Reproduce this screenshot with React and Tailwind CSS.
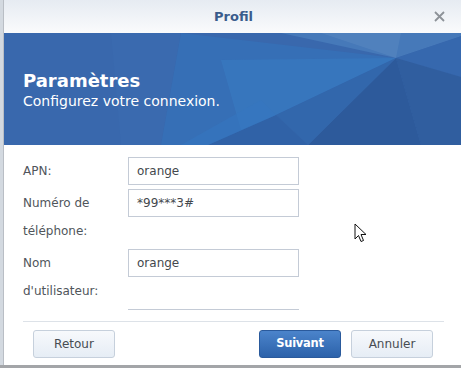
import React from "react";

const font = { fontFamily: '"DejaVu Sans", Verdana, sans-serif' };

function Banner() {
  return (
    <svg className="absolute inset-0" width="460" height="112" viewBox="3 33 460 112" preserveAspectRatio="none">
      <rect x="3" y="33" width="460" height="112" fill="#3968ad" />
      <polygon points="110,33 180,33 160,145 120,145" fill="#3a6aaf" />
      <polygon points="180,33 395,58 275,115 230,145 160,145" fill="#366fb6" />
      <polygon points="220,60 395,58 275,115 240,130" fill="#3779c0" opacity="0.7" />
      <polygon points="280,33 470,33 395,58" fill="#4679b9" />
      <polygon points="320,33 400,33 395,58" fill="#5484bf" opacity="0.7" />
      <polygon points="395,58 470,33 470,80" fill="#3668ae" />
      <polygon points="395,58 470,80 470,145 420,145" fill="#305e9f" />
      <polygon points="395,58 420,145 307,145" fill="#2d5a9b" />
      <polygon points="395,58 307,145 275,115" fill="#3267ac" />
      <polygon points="275,115 307,145 207,145" fill="#3062a7" />
      <polygon points="260,100 275,115 207,145 180,145" fill="#3676bf" opacity="0.6" />
    </svg>
  );
}

function Label({ children }) {
  return (
    <div className="w-[105px] shrink-0 text-[12px] leading-[28px] text-[#50555b]">
      {children}
    </div>
  );
}

function Input({ value }) {
  return (
    <div className="w-[171px] h-[28px] border border-[#c4cbd6] bg-white px-[8px] text-[12px] leading-[26px] text-[#44484d]">
      {value}
    </div>
  );
}

export default function App() {
  return (
    <div className="w-[461px] h-[368px] overflow-hidden bg-[#a3a5a8] flex" style={font}>
      <div className="w-[3px] h-[365px] shrink-0 bg-[#d3d9e0]" />
      <div className="relative w-[460px] h-[365px] shrink-0 bg-white flex flex-col border-l border-[#b9bec5]">
        {/* title bar */}
        <div className="relative h-[33px] shrink-0 bg-gradient-to-b from-[#e6ebf2] to-[#fafbfc] flex items-center justify-center">
          <span className="text-[13px] font-bold text-[#3a5c8c] leading-[16px]">Profil</span>
          <svg className="absolute left-[430px] top-[11px]" width="11" height="11" viewBox="0 0 11 11">
            <path d="M1 1 L10 10 M10 1 L1 10" stroke="#8d9298" strokeWidth="1.8" />
          </svg>
        </div>
        {/* banner */}
        <div className="relative h-[112px] shrink-0 overflow-hidden">
          <Banner />
          <div className="relative pl-[19px] pt-[37px] text-white">
            <div className="text-[18px] leading-[22px] font-bold">Paramètres</div>
            <div className="text-[14px] leading-[18px]">Configurez votre connexion.</div>
          </div>
        </div>
        {/* form */}
        <div className="h-[165px] shrink-0 overflow-hidden pl-[19px] pt-[12px] flex flex-col gap-[4px]">
          <div className="flex items-start">
            <Label>APN:</Label>
            <Input value="orange" />
          </div>
          <div className="flex items-start">
            <Label>Numéro de<br />téléphone:</Label>
            <Input value="*99***3#" />
          </div>
          <div className="flex items-start">
            <Label>Nom<br />d'utilisateur:</Label>
            <Input value="orange" />
          </div>
          <div className="flex">
            <div className="w-[105px] shrink-0" />
            <Input value="" />
          </div>
        </div>
        {/* footer */}
        <div className="mx-[19px] mt-[11px] h-[1px] bg-[#dde2e8]" />
        <div className="mt-[8px] pl-[29px] pr-[30px] flex items-center">
          <button className="w-[82px] h-[28px] rounded-[3px] border border-[#c6d0dc] bg-gradient-to-b from-[#f7f9fc] to-[#e6edf5] text-[12px] text-[#474c52]">
            Retour
          </button>
          <div className="flex-1" />
          <button className="w-[82px] h-[28px] rounded-[3px] border border-[#2a5a9c] bg-gradient-to-b from-[#4b84cb] to-[#2c62aa] text-[11.5px] font-bold tracking-[-0.3px] text-white">
            Suivant
          </button>
          <button className="ml-[10px] w-[82px] h-[28px] rounded-[3px] border border-[#c6d0dc] bg-gradient-to-b from-[#f7f9fc] to-[#e6edf5] text-[12px] text-[#474c52]">
            Annuler
          </button>
        </div>
        {/* mouse cursor */}
        <svg className="absolute left-[350px] top-[223px]" width="14" height="21" viewBox="0 0 14 21">
          <path d="M1 1 L1 16 L4.5 12.5 L7 18.5 L9.5 17.5 L7 11.5 L12 11.5 Z" fill="white" stroke="#111" strokeWidth="1" strokeLinejoin="miter" />
        </svg>
      </div>
    </div>
  );
}
